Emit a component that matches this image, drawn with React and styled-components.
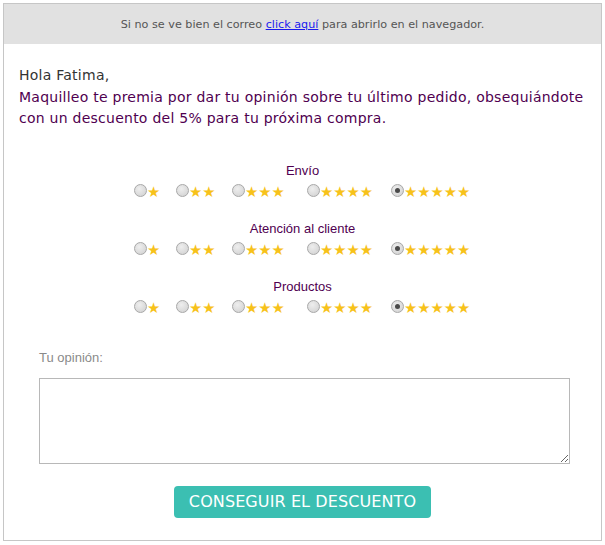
import React from "react";
import styled, { createGlobalStyle } from "styled-components";

const GlobalStyle = createGlobalStyle`
    html, body {
        margin: 0;
        padding: 0;
        background: #ffffff;
    }
`;

// 바깥 테두리
const Frame = styled.div`
    margin: 3px;
    border: 1px solid #c6c6c6;
    height: 538px;
    box-sizing: border-box;
    display: flex;
    flex-direction: column;
`;

// 상단 회색 바
const TopBar = styled.div`
    background: #e1e1e1;
    height: 40px;
    display: flex;
    align-items: center;
    justify-content: center;
    font-family: "DejaVu Sans", Tahoma, sans-serif;
    font-size: 11.2px;
    color: #555555;

    a {
        color: #1a1aee;
        text-decoration: underline;
    }
`;

const Intro = styled.div`
    padding: 21px 15px 0;
    font-family: "DejaVu Sans", Tahoma, sans-serif;
    font-size: 14px;
    letter-spacing: 0.25px;
    line-height: 21.5px;
    color: #500050;
`;

const Greeting = styled.div`
    color: #333333;
`;

const Ratings = styled.div`
    margin-top: 32px;
    display: flex;
    flex-direction: column;
    align-items: center;
    gap: 20px;
`;

const Group = styled.div`
    display: flex;
    flex-direction: column;
    align-items: center;
    gap: 2px;
`;

const Label = styled.div`
    font-family: "Liberation Sans", Arial, sans-serif;
    font-size: 13px;
    color: #500050;
    line-height: 17px;
`;

// 표처럼 칸 너비가 제각각
const Options = styled.div`
    display: grid;
    grid-template-columns: 42px 56px 75px 84px 80px;
    align-items: center;
`;

const Option = styled.label`
    display: flex;
    align-items: center;
`;

const Radio = styled.span`
    width: 11px;
    height: 11px;
    border-radius: 50%;
    border: 1px solid #a8a8a8;
    background: radial-gradient(circle at 40% 35%, #eeeeee, #cfcfcf);
    display: flex;
    align-items: center;
    justify-content: center;

    &::after {
        content: "";
        width: 5px;
        height: 5px;
        border-radius: 50%;
        background: ${(p) => (p.$checked ? "#4a4a4a" : "transparent")};
    }
`;

const Stars = styled.span`
    font-family: "DejaVu Sans", sans-serif;
    font-size: 14.8px;
    line-height: 16px;
    color: #f7c21a;
    margin-top: 3px;
`;

const OpinionBlock = styled.div`
    padding: 34px 31px 0 35px;
    display: flex;
    flex-direction: column;
`;

const OpinionLabel = styled.div`
    font-family: "Liberation Sans", Arial, sans-serif;
    font-size: 13px;
    color: #8a8a8a;
    margin-bottom: 13px;
`;

const TextArea = styled.textarea`
    height: 86px;
    box-sizing: border-box;
    border: 1px solid #b8b8b8;
    resize: vertical;
    outline: none;
`;

const ButtonRow = styled.div`
    display: flex;
    justify-content: center;
    margin-top: 22px;
`;

const Button = styled.button`
    background: #3bbfb2;
    color: #ffffff;
    border: none;
    border-radius: 4px;
    height: 32px;
    padding: 0 15px;
    font-family: "DejaVu Sans", Tahoma, sans-serif;
    font-size: 16px;
    letter-spacing: 0.1px;
    cursor: pointer;
`;

const categories = ["Envío", "Atención al cliente", "Productos"];

export default function App() {
    return (
        <>
            <GlobalStyle />
            <Frame>
                <TopBar>
                    <span>
                        Si no se ve bien el correo <a href="#">click aquí</a>{" "}
                        para abrirlo en el navegador.
                    </span>
                </TopBar>
                <Intro>
                    <Greeting>Hola Fatima,</Greeting>
                    Maquilleo te premia por dar tu opinión sobre tu último
                    pedido, obsequiándote con un descuento del 5% para tu
                    próxima compra.
                </Intro>
                <Ratings>
                    {categories.map((c) => (
                        <Group key={c}>
                            <Label>{c}</Label>
                            <Options>
                                {[1, 2, 3, 4, 5].map((n) => (
                                    <Option key={n}>
                                        <Radio $checked={n === 5} />
                                        <Stars>{"★".repeat(n)}</Stars>
                                    </Option>
                                ))}
                            </Options>
                        </Group>
                    ))}
                </Ratings>
                <OpinionBlock>
                    <OpinionLabel>Tu opinión:</OpinionLabel>
                    <TextArea />
                </OpinionBlock>
                <ButtonRow>
                    <Button>CONSEGUIR EL DESCUENTO</Button>
                </ButtonRow>
            </Frame>
        </>
    );
}
